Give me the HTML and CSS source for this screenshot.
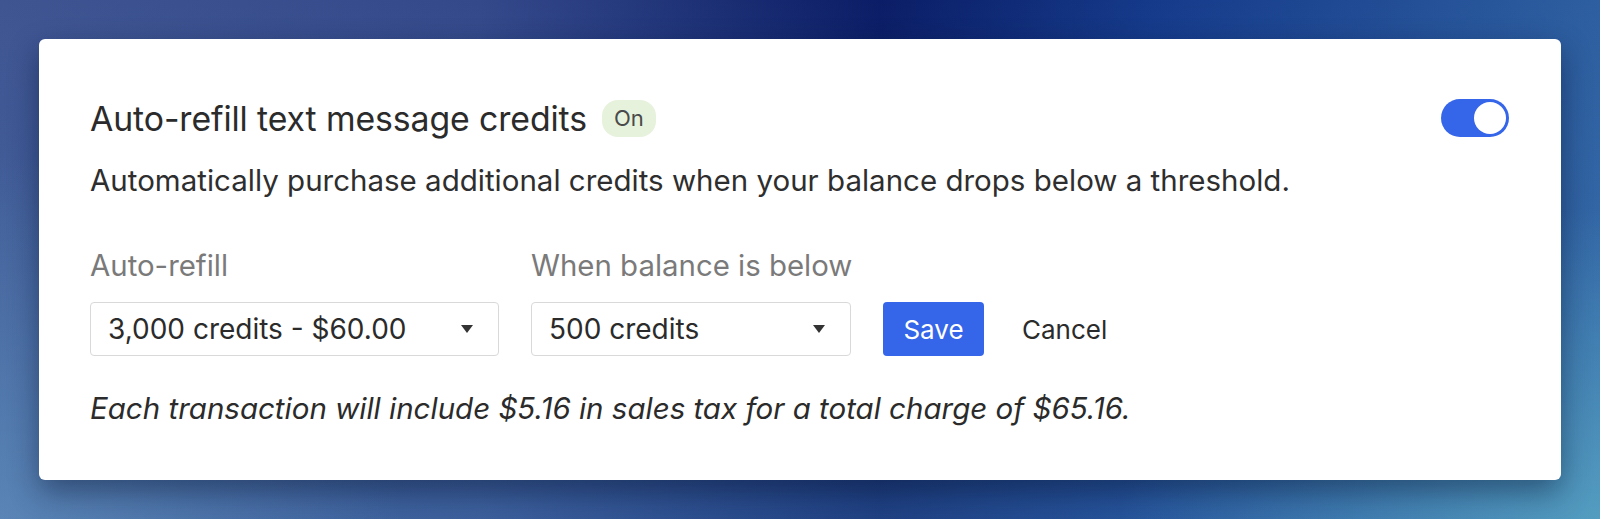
FILE: index.html
```html
<!DOCTYPE html>
<html lang="en">
<head>
<meta charset="utf-8">
<title>Auto-refill</title>
<link rel="stylesheet" href="styles.css">
</head>
<body>
<div class="stage">
  <section class="card">
    <div class="header">
      <div class="title-wrap">
        <h2 class="title">Auto-refill text message credits</h2>
        <span class="badge">On</span>
      </div>
      <span class="toggle" role="switch" aria-checked="true"><span class="knob"></span></span>
    </div>
    <p class="desc">Automatically purchase additional credits when your balance drops below a threshold.</p>
    <div class="form-row">
      <div class="field field-amount">
        <label class="label">Auto-refill</label>
        <div class="select"><span>3,000 credits - $60.00</span><span class="caret"></span></div>
      </div>
      <div class="field field-threshold">
        <label class="label">When balance is below</label>
        <div class="select"><span>500 credits</span><span class="caret"></span></div>
      </div>
      <div class="actions">
        <button class="btn-save">Save</button>
        <button class="btn-cancel">Cancel</button>
      </div>
    </div>
    <p class="note">Each transaction will include $5.16 in sales tax for a total charge of $65.16.</p>
  </section>
</div>
</body>
</html>
```
FILE: styles.css
```css
* { box-sizing: border-box; }
html, body { margin: 0; height: 100%; }
body {
  font-family: Inter, "Noto Sans", sans-serif;
  color: #2e2e2e;
  background:
    radial-gradient(ellipse 30% 60% at 100% 100%, rgba(95,175,200,0.7) 0%, rgba(95,175,200,0) 100%),
    radial-gradient(ellipse 25% 70% at 0% 100%, rgba(110,160,200,0.5) 0%, rgba(110,160,200,0) 100%),
    linear-gradient(to bottom, rgba(90,150,200,0) 0%, rgba(80,150,200,0.3) 100%),
    linear-gradient(90deg, #3f5592 0%, #34498a 30%, #0b1d66 55%, #153a8a 72%, #2e5fa0 100%);
  overflow: hidden;
}
.stage {
  padding: 39px 39px;
}
.card {
  width: 1522px;
  height: 441px;
  background: #fff;
  border-radius: 6px;
  box-shadow: 0 12px 30px rgba(5, 15, 45, 0.45);
  padding: 59px 52px 0 51px;
}
.header {
  display: flex;
  align-items: center;
  justify-content: space-between;
  height: 40px;
}
.title-wrap {
  display: flex;
  align-items: center;
  gap: 15px;
}
.title {
  margin: 0;
  font-size: 33.8px;
  font-weight: 400;
  color: #2b2b2b;
  letter-spacing: -0.1px;
  white-space: nowrap;
}
.badge {
  display: inline-flex;
  align-items: center;
  justify-content: center;
  width: 54px;
  height: 37px;
  border-radius: 16px;
  background: #e6f2dc;
  color: #4a4a4a;
  font-size: 22px;
}
.toggle {
  display: flex;
  align-items: center;
  justify-content: flex-end;
  width: 68px;
  height: 38px;
  border-radius: 19px;
  background: #3565e8;
  padding: 3px;
}
.knob {
  width: 32px;
  height: 32px;
  border-radius: 50%;
  background: #fff;
}
.desc {
  margin: 24px 0 0;
  font-size: 29.5px;
  line-height: 36px;
  color: #2e2e2e;
  white-space: nowrap;
}
.form-row {
  display: flex;
  align-items: flex-end;
  gap: 32px;
  margin-top: 50px;
}
.field {
  display: flex;
  flex-direction: column;
  gap: 18px;
}
.field-amount { width: 409px; }
.field-threshold { width: 320px; }
.label {
  font-size: 29.4px;
  line-height: 36px;
  color: #7a7a7a;
  white-space: nowrap;
}
.select {
  display: flex;
  align-items: center;
  justify-content: space-between;
  height: 54px;
  border: 1px solid #d9d9d9;
  border-radius: 4px;
  padding: 0 25px 0 17px;
  font-size: 28px;
  color: #2b2b2b;
  white-space: nowrap;
}
.caret {
  width: 0;
  height: 0;
  border-left: 6.5px solid transparent;
  border-right: 6.5px solid transparent;
  border-top: 8px solid #333;
}
.actions {
  display: flex;
  align-items: center;
  gap: 20px;
}
.btn-save {
  height: 54px;
  width: 101px;
  border: none;
  border-radius: 4px;
  background: #3565e8;
  color: #fff;
  font-family: inherit;
  font-size: 26px;
}
.btn-cancel {
  height: 54px;
  border: none;
  background: none;
  padding: 0 18px;
  color: #2b2b2b;
  font-family: inherit;
  font-size: 26px;
}
.note {
  margin: 34px 0 0;
  font-size: 29.5px;
  line-height: 36px;
  font-style: italic;
  color: #2b2b2b;
  white-space: nowrap;
}
```
